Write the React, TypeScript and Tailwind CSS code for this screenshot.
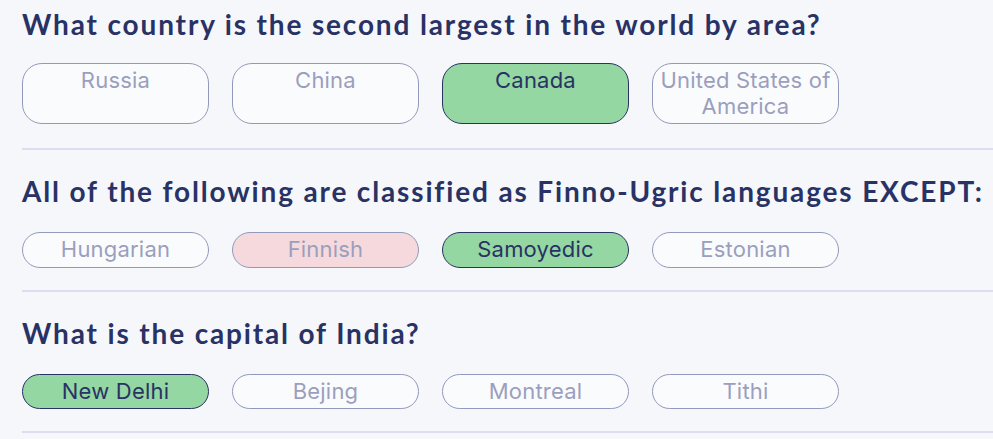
const questions = [
  {
    q: "What country is the second largest in the world by area?",
    answers: [
      { text: "Russia", state: "idle" },
      { text: "China", state: "idle" },
      { text: "Canada", state: "correct" },
      { text: "United States of America", state: "idle" },
    ],
  },
  {
    q: "All of the following are classified as Finno-Ugric languages EXCEPT:",
    answers: [
      { text: "Hungarian", state: "idle" },
      { text: "Finnish", state: "wrong" },
      { text: "Samoyedic", state: "correct" },
      { text: "Estonian", state: "idle" },
    ],
  },
  {
    q: "What is the capital of India?",
    answers: [
      { text: "New Delhi", state: "correct" },
      { text: "Bejing", state: "idle" },
      { text: "Montreal", state: "idle" },
      { text: "Tithi", state: "idle" },
    ],
  },
];

const stateClasses: Record<string, string> = {
  idle: "bg-[#fafbfd] border-[#9299bb] text-[#9a9fbd]",
  correct: "bg-[#94d7a2] border-[#293264] text-[#293264]",
  wrong: "bg-[#f6d9dc] border-[#9299bb] text-[#9a9fbd]",
};

function Question({ q, answers }: (typeof questions)[number]) {
  return (
    <div className="group pt-[24px] first:pt-[7px] pb-[22px] first:pb-[24px] border-b-2 border-[#dbdef0]">
      <h2 className="font-['Lato',sans-serif] font-bold text-[28px] leading-[34px] tracking-[1.85px] text-[#293264] whitespace-nowrap">
        {q}
      </h2>
      <div className="flex gap-[23px] mt-[24px] group-first:mt-[22px]">
        {answers.map((a) => (
          <button
            key={a.text}
            className={`w-[187px] shrink-0 flex items-start justify-center border rounded-[20px] px-[2px] py-[4px] text-center font-['Inter',sans-serif] text-[22px] leading-[25.5px] tracking-[0.2px] ${stateClasses[a.state]}`}
          >
            {a.text}
          </button>
        ))}
      </div>
    </div>
  );
}

export default function App() {
  return (
    <div className="min-h-screen bg-[#f5f7fb] pl-[22px] overflow-hidden">
      <div className="w-[1000px]">
        {questions.map((item) => (
          <Question key={item.q} {...item} />
        ))}
      </div>
    </div>
  );
}
